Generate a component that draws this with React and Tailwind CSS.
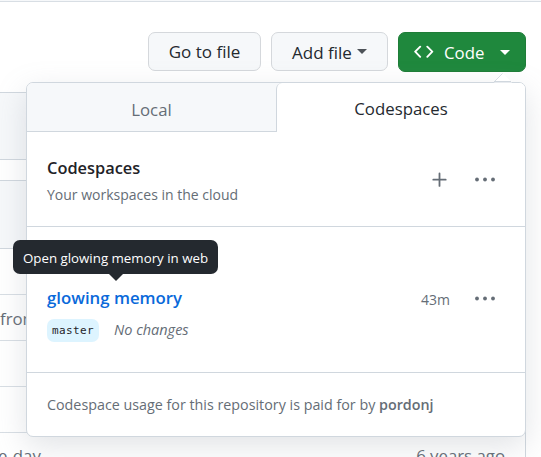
const Dots = () => (
  <svg className="block h-5 w-6 shrink-0" viewBox="0 0 24 20" fill="#656d76">
    <circle cx="4" cy="9.5" r="1.9" />
    <circle cx="12" cy="9.5" r="1.9" />
    <circle cx="20" cy="9.5" r="1.9" />
  </svg>
);

const Caret = ({ color }) => (
  <svg className="block h-[5px] w-[10px] shrink-0" viewBox="0 0 10 5" fill={color}>
    <path d="M0 0h10L5 5z" />
  </svg>
);

const Toolbar = () => (
  <div className="flex h-10 items-start justify-end gap-[10px] pr-[15px]">
    <button className="flex h-[39px] w-[113px] items-center justify-center rounded-[7px] border border-[#d5d8dc] bg-[#f6f8fa] pt-px text-[17px] text-[#24292f]">
      Go to file
    </button>
    <button className="flex h-[39px] w-[117px] items-center rounded-[7px] border border-[#d5d8dc] bg-[#f6f8fa] pl-5 text-[17px] text-[#24292f]">
      <span className="w-[65px] pt-[2px] text-left">Add file</span>
      <Caret color="#4d5258" />
    </button>
    <button className="flex h-10 w-[128px] items-center rounded-[7px] border border-[#1f7d38] bg-[#1f883d] pl-[15px] text-[16.8px] text-white">
      <svg className="block h-5 w-5 shrink-0" viewBox="0 0 20 20" fill="none" stroke="#fff" strokeWidth="1.9" strokeLinecap="round" strokeLinejoin="round">
        <path d="M6.2 4.7L1.2 9.7l5 5.1M13.3 4.7l5 5-5 5.1" />
      </svg>
      <span className="ml-[10px] w-[56px] pt-px text-left">Code</span>
      <Caret color="#fff" />
    </button>
  </div>
);

const Listing = () => (
  <div className="mr-[15px] text-[16.8px] text-[#656d76]">
    <div className="h-[68px] border-y border-r border-[#d0d7de] bg-[#f6f8fa]" />
    <div className="mt-5 h-[277px] overflow-hidden border-t border-r border-[#d0d7de]">
      <div className="h-[67px] bg-[#f6f8fa]" />
      <div className="h-[46px] border-t border-[#d0d7de]" />
      <div className="h-[46px] border-t border-[#d8dee4] pt-[12px] leading-6">from</div>
      <div className="h-[46px] border-t border-[#d8dee4]" />
      <div className="h-[46px] border-t border-[#d8dee4]" />
      <div className="flex h-[46px] justify-between border-t border-[#d8dee4] pt-[11px] pr-[20px] leading-6">
        <span className="-ml-[2px]">e-day</span>
        <span>6 years ago</span>
      </div>
    </div>
  </div>
);

const Popup = () => (
  <div className="absolute top-[82px] left-[26px] h-[355px] w-[500px] rounded-[7px] border border-[#d0d7de] bg-white shadow-[0_10px_30px_rgba(140,149,159,0.25)]">
    <svg className="absolute -top-[10px] left-[466px] h-[10px] w-[20px]" viewBox="0 0 20 10">
      <path d="M1 9.5L10 .5L19 9.5z" fill="#fff" />
      <path d="M1 9L9.5 .5" fill="none" stroke="#d8dee4" />
      <path d="M1 8.5h17" stroke="#d0d7de" />
    </svg>
    <div className="flex h-[49px] text-[16.8px]">
      <div className="flex w-[249px] items-center justify-center rounded-tl-[6px] border-b border-[#d0d7de] bg-[#f6f8fa] pt-[6px] text-[#656d76]">Local</div>
      <div className="grow rounded-tr-[6px] bg-[linear-gradient(90deg,#f6f8fa_50%,#fff_50%)]">
        <div className="flex h-[49px] items-center justify-center rounded-t-[6px] border-l border-[#d0d7de] bg-white pt-[3px] text-[#24292f]">Codespaces</div>
      </div>
    </div>
    <div className="flex h-[95px] items-center justify-between border-b border-[#d0d7de] pr-[28px] pl-5">
      <div className="pt-[3px]">
        <div className="text-[16.4px] leading-[27px] font-semibold text-[#1f2328]">Codespaces</div>
        <div className="text-[14px] leading-[27px] text-[#656d76]">Your workspaces in the cloud</div>
      </div>
      <div className="flex items-center gap-[23px] pt-px">
        <svg className="block h-5 w-5" viewBox="0 0 20 20" stroke="#656d76" strokeWidth="1.8" strokeLinecap="round">
          <path d="M9.5 3.5v12.4M3.3 9.7h12.4" />
        </svg>
        <Dots />
      </div>
    </div>
    <div className="flex h-[146px] justify-between border-b border-[#d0d7de] pt-[57px] pr-[28px] pl-5">
      <div>
        <div className="text-[16.8px] leading-[27px] font-semibold text-[#0969da]">glowing memory</div>
        <div className="mt-[8px] flex h-[23px] items-center">
          <span className="flex h-[23px] w-[52px] items-center justify-center rounded-[7px] bg-[#ddf4ff] pt-[2px] font-['DejaVu_Sans_Mono',monospace] text-[11px] tracking-[0.4px] text-[#1f2328]">master</span>
          <span className="ml-[15px] pb-[2px] text-[14.5px] text-[#656d76] italic">No changes</span>
        </div>
      </div>
      <div className="flex h-[30px] items-center gap-[23px] text-[14px] text-[#656d76]">
        <span>43m</span>
        <Dots />
      </div>
    </div>
    <div className="flex h-[63px] items-center pl-5 text-[14.3px] whitespace-pre text-[#656d76]">
      Codespace usage for this repository is paid for by <span className="font-semibold">pordonj</span>
    </div>
  </div>
);

const Tooltip = () => (
  <div className="absolute top-[240px] left-[13px] flex h-[34px] w-[205px] items-center justify-center rounded-[7px] bg-[#24292f] pt-[3px] text-[13.3px] whitespace-nowrap text-white">
    Open glowing memory in web
    <svg className="absolute top-[34px] left-[96px] h-[7px] w-[14px]" viewBox="0 0 14 7" fill="#24292f">
      <path d="M0 0h14L7 7z" />
    </svg>
  </div>
);

export default function App() {
  return (
    <div className="relative h-[457px] w-[541px] overflow-hidden bg-white font-['Open_Sans','Noto_Sans',sans-serif] whitespace-nowrap">
      <div className="mb-[30px] h-[2px] border-b border-[#d8dee4] bg-[#f6f8fa]" />
      <Toolbar />
      <div className="h-5" />
      <Listing />
      <Popup />
      <Tooltip />
    </div>
  );
}
